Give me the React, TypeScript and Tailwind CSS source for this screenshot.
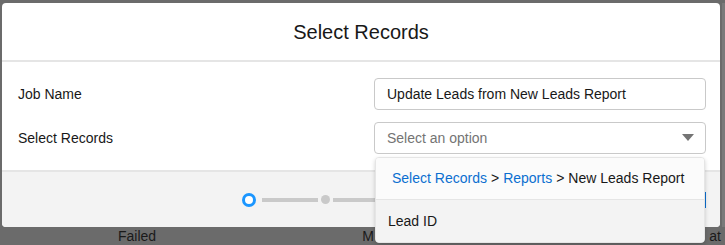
const font = { fontFamily: '"Liberation Sans", Arial, sans-serif' };

const Breadcrumb = () => (
  <div className="flex h-[42px] items-center bg-[#fbfbfb] border-b border-[#e5e5e5] pl-[16px] text-[14px]">
    <span className="text-[#0b6fd0]">Select Records</span>
    <span className="text-[#181818] mx-[4px]">&gt;</span>
    <span className="text-[#0b6fd0]">Reports</span>
    <span className="text-[#181818] mx-[4px]">&gt;</span>
    <span className="text-[#181818]">New Leads Report</span>
  </div>
);

const Dropdown = () => (
  <div className="absolute left-[1px] right-[1px] top-[35px] z-20 overflow-hidden rounded-[4px] bg-white shadow-[0_2px_4px_rgba(0,0,0,0.18)] border border-[#e5e5e5]">
    <Breadcrumb />
    <div className="flex h-[42px] items-center bg-[#f3f3f3] pl-[12px] text-[14px] text-[#181818]">
      Lead ID
    </div>
  </div>
);

const Field = ({ label, children }: { label: string; children: React.ReactNode }) => (
  <div className="flex items-center">
    <div className="w-[372px] pl-[16px] text-[14px] text-[#181818]">{label}</div>
    <div className="relative w-[332px]">{children}</div>
  </div>
);

const Stepper = () => (
  <div className="flex items-center">
    <span className="h-[14px] w-[14px] rounded-full border-[3px] border-[#1b96ff] bg-white" />
    <span className="ml-[6px] h-[4px] w-[56px] bg-[#c9c9c9]" />
    <span className="ml-[3px] h-[9px] w-[9px] rounded-full bg-[#c9c9c9]" />
    <span className="ml-[3px] h-[4px] w-[60px] bg-[#c9c9c9]" />
  </div>
);

export default function App() {
  return (
    <div className="h-[245px] w-[725px] overflow-hidden bg-[#6b6b6b]" style={font}>
      <div className="flex pt-[3px] pl-[2px]">
        <div className="w-[718px] rounded-[4px] bg-white">
          {/* Header */}
          <div className="flex h-[59px] items-center justify-center border-b-2 border-[#e5e5e5] pt-[1px] text-[20px] text-[#181818]">
            Select Records
          </div>

          {/* Body */}
          <div className="flex flex-col gap-[12px] py-[16px]">
            <Field label="Job Name">
              <div className="flex h-[32px] items-center rounded-[4px] border border-[#c9c9c9] px-[12px] text-[14px] text-[#181818]">
                Update Leads from New Leads Report
              </div>
            </Field>
            <Field label="Select Records">
              <div className="flex h-[32px] items-center justify-between rounded-[4px] border border-[#c9c9c9] pl-[12px] pr-[11px] text-[14px] text-[#747474]">
                <span>Select an option</span>
                <svg width="12" height="8" viewBox="0 0 12 8">
                  <path d="M0 0h12L6 7z" fill="#747474" />
                </svg>
              </div>
              <Dropdown />
            </Field>
          </div>

          {/* Footer */}
          <div className="flex h-[57px] items-center rounded-b-[4px] border-t-2 border-[#e5e5e5] bg-[#f3f3f3] pl-[240px]">
            <Stepper />
            <div className="ml-auto mr-[14px] h-[16px] w-[2px] bg-[#0b6fd0]" />
          </div>
        </div>
        <div className="ml-[2px] w-[3px] bg-[#7a7a7a]" />
      </div>

      {/* Page behind the overlay */}
      <div className="flex h-[18px] items-center text-[14px] leading-[16px] text-[#1a1a1a]">
        <span className="ml-[118px]">Failed</span>
        <span className="ml-[206px]">M</span>
        <span className="ml-auto mr-[4px]">at</span>
      </div>
    </div>
  );
}
